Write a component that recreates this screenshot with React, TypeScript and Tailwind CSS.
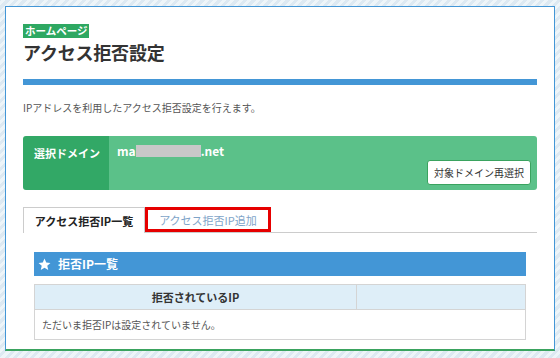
import { useState } from 'react';

const font = { fontFamily: '"Noto Sans CJK JP", "Noto Sans", sans-serif' };

function StarIcon() {
  return (
    <svg width="13" height="13" viewBox="0 0 24 24" className="shrink-0">
      <polygon
        points="12,1 15.2,8.4 23,9.1 17.1,14.3 18.9,22.2 12,18.1 5.1,22.2 6.9,14.3 1,9.1 8.8,8.4"
        fill="#fff"
      />
    </svg>
  );
}

export default function App() {
  const [tab, setTab] = useState<'list' | 'add'>('list');

  return (
    <div
      className="w-[560px] h-[358px] overflow-hidden pt-[6px] pl-[5px] bg-[repeating-linear-gradient(-45deg,#dde9f2_0_3px,#eef5f9_3px_6px)]"
      style={font}
    >
      <div className="w-[550px] h-[345px] bg-white border-t border-l border-r border-[#4396d6] border-b-2 border-b-[#3aa35f] px-[17px] pt-[17px]">
        <div className="w-fit bg-[#2ea862] text-white font-bold text-[10.5px] leading-[14px] px-[2px]">
          ホームページ
        </div>
        <h1 className="text-[18px] font-bold text-[#333] leading-[26px] mt-[1px] tracking-[-0.2px]">
          アクセス拒否設定
        </h1>
        <div className="h-[6px] bg-[#4396d6] mt-[14px]" />

        <p className="text-[10px] text-[#555] leading-[14px] mt-[16px]">
          IPアドレスを利用したアクセス拒否設定を行えます。
        </p>

        <div className="flex h-[54px] mt-[21px] rounded-[3px] overflow-hidden">
          <div className="w-[86px] bg-[#32a866] text-white font-bold text-[11px] leading-[14px] pl-[11px] pt-[10px]">
            選択ドメイン
          </div>
          <div className="flex-1 bg-[#5bc189] flex flex-col">
            <div className="flex items-center pl-[8px] pt-[9px] text-white font-bold text-[12px] leading-[12px]">
              <span>ma</span>
              <span className="inline-block w-[65px] h-[12px] bg-[#c8c8c8]" />
              <span>.net</span>
            </div>
            <button className="self-end mt-auto mb-[5px] mr-[6px] h-[25px] px-[6px] bg-white border border-[#3aa35f] rounded-[3px] text-[10px] text-[#333] leading-[14px]">
              対象ドメイン再選択
            </button>
          </div>
        </div>

        <div className="flex items-end mt-[17px] border-b border-[#cccccc] h-[26px]">
          <button
            onClick={() => setTab('list')}
            className="h-[26px] w-[122px] bg-white border-t border-l border-r border-[#cccccc] -mb-px text-[11px] font-bold text-[#222] leading-[14px]"
          >
            アクセス拒否IP一覧
          </button>
          <button
            onClick={() => setTab('add')}
            className="h-[25px] w-[126px] border-[3px] border-[#e60000] text-[11px] text-[#7ea4c8] leading-[14px] self-start"
          >
            アクセス拒否IP追加
          </button>
        </div>

        <div className="px-[11px] mt-[19px]">
          <div className="h-[24px] bg-[#4396d6] flex items-center gap-[7px] pl-[4px] text-white font-bold text-[12px]">
            <StarIcon />
            <span>拒否IP一覧</span>
          </div>
          {tab === 'list' && (
            <table className="w-full mt-[8px] border-collapse text-[11px]">
              <thead>
                <tr className="bg-[#deeef8] h-[25px]">
                  <th className="w-[322px] border border-[#d4d4d4] font-bold text-[#333] text-center">
                    拒否されているIP
                  </th>
                  <th className="border border-[#d4d4d4]" />
                </tr>
              </thead>
              <tbody>
                <tr className="h-[30px]">
                  <td colSpan={2} className="border border-[#d4d4d4] pl-[7px] text-[10px] text-[#555]">
                    ただいま拒否IPは設定されていません。
                  </td>
                </tr>
              </tbody>
            </table>
          )}
        </div>
      </div>
    </div>
  );
}
